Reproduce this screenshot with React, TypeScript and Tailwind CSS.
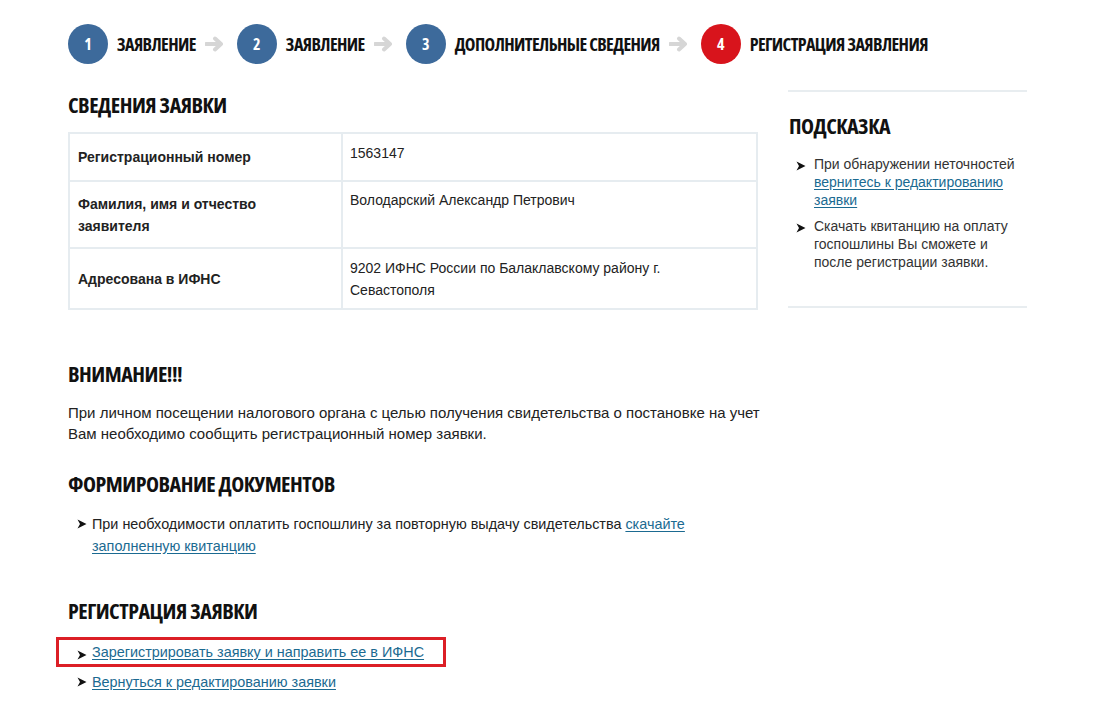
import React from 'react';

const cond = "font-['Open_Sans','Roboto',sans-serif] font-stretch-[75%] font-bold uppercase";
const body = "font-['Liberation_Sans',Arial,sans-serif]";

const steps = [
  { n: '1', label: 'Заявление', active: false },
  { n: '2', label: 'Заявление', active: false },
  { n: '3', label: 'Дополнительные сведения', active: false },
  { n: '4', label: 'Регистрация заявления', active: true },
];

const StepArrow = () => (
  <svg width="20" height="16" viewBox="0 0 20 16" className="ml-[9px] mr-[12px]">
    <path d="M1 8h14M10 2.5L16 8l-6 5.5" fill="none" stroke="#d6d6d6" strokeWidth="4" strokeLinecap="round" strokeLinejoin="round" />
  </svg>
);

const Bullet = () => (
  <svg width="10" height="10" viewBox="0 0 10 10" className="shrink-0 mt-[6px]">
    <path d="M0.5 0.5L9.5 5L0.5 9.5L3 5Z" fill="#111" />
  </svg>
);

const Heading: React.FC<{ children: React.ReactNode; className?: string }> = ({ children, className = '' }) => (
  <h2 className={`${cond} text-[22px] tracking-[-0.5px] leading-none text-[#111] ${className}`}>{children}</h2>
);

const link = 'text-[#1b6a91] underline underline-offset-2';

export default function App() {
  return (
    <div className={`${body} bg-white w-[1093px] h-[723px] text-[#222] text-[14px]`}>
      <div className="pl-[68px] pt-[24px]">
        {/* steps */}
        <div className="flex items-center h-[40px] whitespace-nowrap">
          {steps.map((s, i) => (
            <React.Fragment key={i}>
              {i > 0 && <StepArrow />}
              <div className="flex items-center">
                <div
                  className={`w-[40px] h-[40px] rounded-full flex items-center justify-center text-white text-[16px] ${cond} ${s.active ? 'bg-[#d8141c]' : 'bg-[#3d6a9b]'}`}
                >
                  {s.n}
                </div>
                <span className={`${cond} ml-[9px] text-[18px] tracking-[-0.6px] text-[#111]`}>{s.label}</span>
              </div>
            </React.Fragment>
          ))}
        </div>

        <div className="flex mt-[26px]">
          {/* main column */}
          <div className="w-[690px]">
            <Heading className="mt-[3px]">Сведения заявки</Heading>
            <table className="mt-[17px] w-[690px] border-collapse border-2 border-[#e6ecf0]">
              <tbody>
                <tr className="h-[48px]">
                  <td className="w-[273px] border-2 border-[#e6ecf0] pl-[8px] align-middle font-bold leading-[22px]">Регистрационный номер</td>
                  <td className="border-2 border-[#e6ecf0] pl-[7px] pt-[8px] align-top leading-[22px]">1563147</td>
                </tr>
                <tr className="h-[67px]">
                  <td className="border-2 border-[#e6ecf0] pl-[8px] pr-[30px] align-middle font-bold leading-[22px]">Фамилия, имя и отчество заявителя</td>
                  <td className="border-2 border-[#e6ecf0] pl-[7px] pt-[7px] align-top leading-[22px]">Володарский Александр Петрович</td>
                </tr>
                <tr className="h-[61px]">
                  <td className="border-2 border-[#e6ecf0] pl-[8px] align-middle font-bold leading-[22px]">Адресована в ИФНС</td>
                  <td className="border-2 border-[#e6ecf0] pl-[7px] pr-[60px] pt-[8px] align-top leading-[22px]">9202 ИФНС России по Балаклавскому району г. Севастополя</td>
                </tr>
              </tbody>
            </table>

            <Heading className="mt-[52px]">Внимание!!!</Heading>
            <p className="mt-[18px] leading-[21px] text-[15px] text-[#222] whitespace-nowrap">
              При личном посещении налогового органа с целью получения свидетельства о постановке на учет
              <br />
              Вам необходимо сообщить регистрационный номер заявки.
            </p>

            <Heading className="mt-[28px]">Формирование документов</Heading>
            <div className="mt-[19px] flex gap-[5px] pl-[9px] leading-[22px] text-[14.4px]">
              <Bullet />
              <span>
                При необходимости оплатить госпошлину за повторную выдачу свидетельства{' '}
                <a className={link}>скачайте заполненную квитанцию</a>
              </span>
            </div>

            <Heading className="mt-[42px]">Регистрация заявки</Heading>
            <div className="mt-[16px] -ml-[12px] w-[390px] h-[30px] border-[3px] border-[#dc1f26] flex items-center gap-[5px] pl-[18px] text-[14.4px]">
              <Bullet />
              <a className={`${link} leading-[22px]`}>Зарегистрировать заявку и направить ее в ИФНС</a>
            </div>
            <div className="mt-[4px] flex gap-[5px] pl-[9px] leading-[22px] text-[14.4px]">
              <Bullet />
              <a className={link}>Вернуться к редактированию заявки</a>
            </div>
          </div>

          {/* sidebar */}
          <div className="ml-[30px] w-[239px] self-start">
            <div className="border-t-2 border-[#e8edf0] pt-[22px] pb-[35px] border-b-2">
              <Heading className="pl-[1px]">Подсказка</Heading>
              <ul className="mt-[19px] pl-[8px] pr-[4px] text-[#333] leading-[18px] space-y-[8px]">
                <li className="flex gap-[8px]">
                  <Bullet />
                  <span>
                    При обнаружении неточностей <a className={link}>вернитесь к редактированию заявки</a>
                  </span>
                </li>
                <li className="flex gap-[8px]">
                  <Bullet />
                  <span>Скачать квитанцию на оплату госпошлины Вы сможете и после регистрации заявки.</span>
                </li>
              </ul>
            </div>
          </div>
        </div>
      </div>
    </div>
  );
}
